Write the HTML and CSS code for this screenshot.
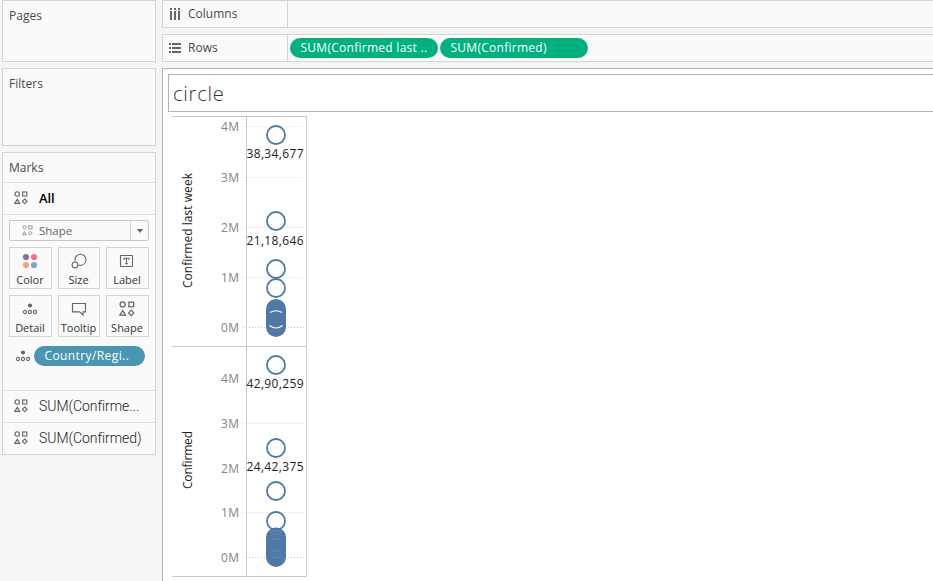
FILE: index.html
```
<!DOCTYPE html>
<html lang="en">
<head>
<meta charset="utf-8">
<title>circle</title>
<link rel="stylesheet" href="styles.css">
</head>
<body>
<svg class="defs" width="0" height="0" aria-hidden="true">
  <symbol id="shapes" viewBox="0 0 14 14">
    <g fill="none" stroke="currentColor" stroke-width="1.1">
      <circle cx="3.2" cy="3" r="2.2"/><rect x="8.6" y="1" width="4.2" height="4"/>
      <path d="M3.2 8.4L5.7 12.4H.7ZM10.7 8L13 10.4L10.7 12.8L8.4 10.4Z"/>
    </g>
  </symbol>
  <symbol id="detail" viewBox="0 0 16 12">
    <circle cx="8" cy="2.5" r="2.1" fill="currentColor"/>
    <g fill="none" stroke="currentColor" stroke-width="1.1"><circle cx="3" cy="9" r="1.6"/><circle cx="8" cy="9" r="1.6"/><circle cx="13" cy="9" r="1.6"/></g>
  </symbol>
</svg>
<div class="app">
  <aside class="sidebar">
    <section class="card pages"><h2>Pages</h2></section>
    <section class="card filters"><h2>Filters</h2></section>
    <section class="card marks">
      <h2>Marks</h2>
      <div class="row all"><svg class="i14"><use href="#shapes"/></svg><b>All</b></div>
      <div class="controls">
        <div class="select"><svg class="i11"><use href="#shapes"/></svg><span>Shape</span><i class="arrow"></i></div>
        <div class="buttons">
          <div class="btn"><svg width="16" height="16"><circle cx="4" cy="4" r="3.1" fill="#8a6f9e"/><circle cx="12" cy="4" r="3.1" fill="#fc6d7b"/><circle cx="4" cy="12" r="3.1" fill="#f2a57b"/><circle cx="12" cy="12" r="3.1" fill="#7ea6cb"/></svg><span>Color</span></div>
          <div class="btn"><svg width="16" height="16" fill="none" stroke="#666" stroke-width="1.1"><path d="M4.2 8.3A5.5 5.5 0 1 1 7.400 11.900"/><circle cx="4" cy="11.9" r="2.9"/></svg><span>Size</span></div>
          <div class="btn"><svg width="16" height="16" fill="none" stroke="#666" stroke-width="1.1"><rect x="1.500" y="2.5" width="12" height="11" rx=".5"/><path d="M5 7V5.2H10V7M7.500 5.2V10.8M6 10.8H9"/></svg><span>Label</span></div>
          <div class="btn"><svg width="16" height="16" viewBox="0 -2 16 16"><use href="#detail" width="16" height="12"/></svg><span>Detail</span></div>
          <div class="btn"><svg width="16" height="16" fill="none" stroke="#666" stroke-width="1.15"><path d="M1.5 2.5H14.5V10.8H12V14L8.5 10.8H1.5Z"/></svg><span>Tooltip</span></div>
          <div class="btn"><svg width="16" height="16" viewBox="0 0 14 14"><use href="#shapes" width="14" height="14"/></svg><span>Shape</span></div>
        </div>
        <div class="encoding"><svg width="16" height="12"><use href="#detail"/></svg><span class="pill blue">Country/Regi..</span></div>
      </div>
      <div class="row"><svg class="i14"><use href="#shapes"/></svg><span>SUM(Confirme...</span></div>
      <div class="row"><svg class="i14"><use href="#shapes"/></svg><span>SUM(Confirmed)</span></div>
    </section>
  </aside>
  <main class="main">
    <div class="shelf"><div class="name"><svg width="13" height="13" fill="#666"><path d="M1 0h2v2H1zM5 0h2v2H5zM9 0h2v2H9zM1 3h2v9H1zM5 3h2v9H5zM9 3h2v9H9z"/></svg><span>Columns</span></div></div>
    <div class="shelf"><div class="name"><svg width="13" height="13" fill="#666"><path d="M0 1h2v2H0zM0 5h2v2H0zM0 9h2v2H0zM3 1h9v2H3zM3 5h9v2H3zM3 9h9v2H3z"/></svg><span>Rows</span></div><span class="pill green">SUM(Confirmed last ..</span><span class="pill green">SUM(Confirmed)</span></div>
    <div class="view">
      <h1>circle</h1>
      <svg class="chart" width="135" height="461" viewBox="172 116 135 461">
        <g class="grid">
          <path d="M242 126.500H303M242 177.500H303M242 227.500H303M242 277.500H303M242 327.500H246M242 378.500H303M242 423.500H303M242 468.500H303M242 512.500H303M242 557.500H246"/>
          <path class="zero" d="M249 327.500H304M249 557.500H304"/>
        </g>
        <path class="frame" d="M172 116.500H306.500V576.500H172M172 346.500H306M246.500 117V576"/>
        <g class="ticks">
          <text x="221" y="131" textLength="18">4M</text><text x="221" y="182" textLength="18">3M</text><text x="221" y="232" textLength="18">2M</text><text x="221" y="282" textLength="18">1M</text><text x="221" y="332" textLength="18">0M</text>
          <text x="221" y="383" textLength="18">4M</text><text x="221" y="428" textLength="18">3M</text><text x="221" y="473" textLength="18">2M</text><text x="221" y="517" textLength="18">1M</text><text x="221" y="562" textLength="18">0M</text>
        </g>
        <g class="axis">
          <text transform="translate(192 288) rotate(-90)" textLength="115">Confirmed last week</text>
          <text transform="translate(192 489) rotate(-90)" textLength="58">Confirmed</text>
        </g>
        <g class="dots">
          <circle cx="276" cy="135" r="9"/><circle cx="276" cy="221" r="9"/><circle cx="276" cy="269" r="9"/><circle cx="276" cy="288" r="9"/>
          <circle cx="276" cy="365" r="9"/><circle cx="276" cy="448" r="9"/><circle cx="276" cy="491" r="9"/><circle cx="276" cy="521" r="9"/>
        </g>
        <rect class="mass" x="266" y="299" width="20" height="38" rx="10"/>
        <path class="gap" d="M270 312.500Q276 309 282 312.500M269.500 325.500Q276 330.500 282.500 325.500"/>
        <rect class="mass" x="266" y="527.500" width="20" height="39.500" rx="10"/>
        <path class="trace" d="M270 532.500Q276 528.500 282 532.500M271 535.500Q276 532 281 535.500M271 540Q276 537 281 540M271 550Q276 553 281 550M271 556Q276 560 281 556"/>
        <g class="values">
          <text x="246.500" y="158" textLength="57">38,34,677</text><text x="246.500" y="245" textLength="57">21,18,646</text><text x="246.500" y="388" textLength="57">42,90,259</text><text x="246.500" y="471" textLength="57">24,42,375</text>
        </g>
      </svg>
    </div>
  </main>
</div>
</body>
</html>
```
FILE: styles.css
```
* { box-sizing: border-box; }
body { margin: 0; background: #f5f5f5; font: 12px/16px "Open Sans", "Noto Sans", sans-serif; color: #4a4a4a; }
.defs { position: absolute; }
svg { display: block; flex: none; color: #666; }
.app { display: grid; grid-template-columns: 154px 1fr; column-gap: 6px; width: 933px; height: 581px; padding-left: 2px; overflow: hidden; }
.sidebar { display: flex; flex-direction: column; gap: 6px; }
.card { background: #fafafa; border: 1px solid #d4d4d4; }
.card h2 { margin: 0; padding: 7px 6px 0; font-size: 12px; line-height: 16px; font-weight: 400; letter-spacing: 0; }
.pages { height: 62px; }
.filters { height: 78px; }
.marks { height: 303px; }
.marks h2 { height: 29px; }
.row { display: flex; align-items: center; height: 32px; border-top: 1px solid #dedede; padding: 0 0 1px 11px; gap: 11px; font: 350 14px/20px Roboto, sans-serif; letter-spacing: -.05px; color: #222; white-space: nowrap; }
.row.all { padding-bottom: 2px; }
.row b { font: 600 13px/20px "Open Sans", sans-serif; color: #000; }
.i14 { width: 14px; height: 14px; }
.i11 { width: 11px; height: 11px; color: #8a8a8a; }
.controls { height: 176px; border-top: 1px solid #dedede; padding: 5px 6px 0; }
.select { display: flex; align-items: center; width: 140px; height: 21px; border: 1px solid #c8c8c8; border-radius: 2px; padding-left: 12px; gap: 6px; font-size: 11.500px; color: #666; }
.arrow { display: flex; align-items: center; justify-content: center; width: 18px; height: 19px; margin-left: auto; border-left: 1px solid #d4d4d4; }
.arrow::after { content: ""; border: 3.5px solid transparent; border-top: 4px solid #666; border-bottom: 0; }
.buttons { display: grid; grid-template-columns: 43px 42px 43px; gap: 6px; margin-top: 6px; }
.btn { height: 42px; border: 1px solid #d4d4d4; padding: 5px 1px 0 0; display: flex; flex-direction: column; align-items: center; font: 11px/16px "Open Sans", sans-serif; color: #333; white-space: nowrap; }
.btn span { margin-top: 3px; }
.encoding { display: flex; align-items: center; gap: 3px; margin-top: 9px; padding-left: 6px; }
.pill { height: 20px; border-radius: 10px; color: #fff; font: 500 12px/20px "Open Sans", sans-serif; letter-spacing: .27px; padding-left: 10.500px; white-space: nowrap; }
.blue { width: 111px; background: #4996b2; letter-spacing: .4px; }
.green { width: 148px; background: #00b180; }
.main { display: flex; flex-direction: column; gap: 6px; min-width: 0; }
.shelf { display: flex; align-items: center; gap: 2px; height: 28px; border: 1px solid #d4d4d4; border-right: 0; background: #fafafa; }
.name { display: flex; align-items: center; gap: 6px; width: 125px; height: 26px; padding-left: 6px; border-right: 1px solid #d4d4d4; }
.view { flex: 1; background: #fff; border: solid #b4b4b4; border-width: 1px 0 0 1px; padding: 5px 0 0 5px; }
.view h1 { height: 38px; margin: 0; border: 1px solid #b4b4b4; border-right: 0; padding-left: 4px; font: 300 20px/38px "Open Sans", sans-serif; color: #333; letter-spacing: .8px; }
.chart { margin: 4px 0 0 4px; }
.grid path { fill: none; stroke: #f0f0f0; }
.grid .zero { stroke: #c8c8c8; stroke-dasharray: 1 2; }
.frame { fill: none; stroke: #c8c8c8; }
.chart text { font: 12px "Open Sans", sans-serif; fill: #222; }
.chart .ticks text { fill: #858585; }
.dots circle { fill: none; stroke: #4e79a7; stroke-width: 1.8; }
.mass { fill: #4e79a7; }
.gap { fill: none; stroke: #fff; stroke-width: 1.2; }
.trace { fill: none; stroke: #7598bb; stroke-width: .6; }
```
